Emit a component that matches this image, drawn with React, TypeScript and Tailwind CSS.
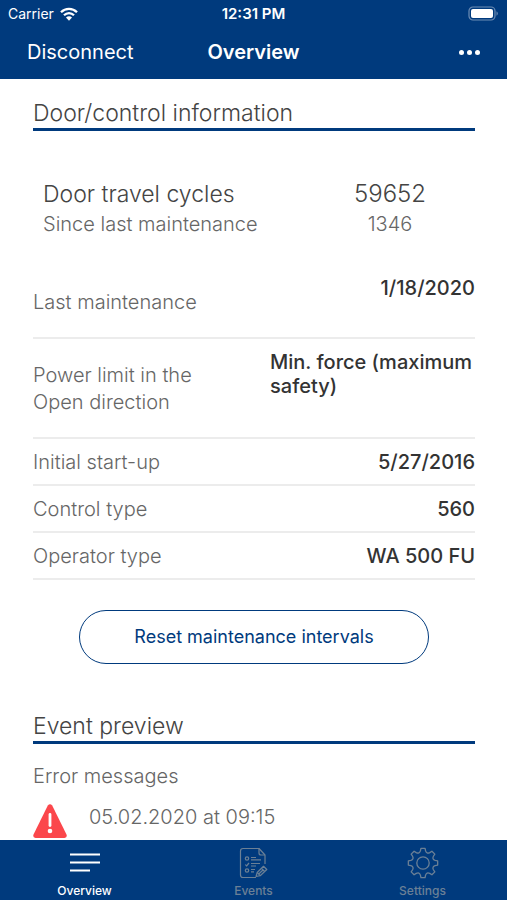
import React from 'react'

interface InfoRow {
  label: string
  value: string
  height: string
  align: string
}

// Door and control details
const infoRows: InfoRow[] = [
  { label: 'Last maintenance', value: '1/18/2020', height: 'min-h-[74px]', align: 'text-right' },
  {
    label: 'Power limit in the Open direction',
    value: 'Min. force (maximum safety)',
    height: 'min-h-[100px]',
    align: 'text-left',
  },
  { label: 'Initial start-up', value: '5/27/2016', height: 'min-h-[47px]', align: 'text-right' },
  { label: 'Control type', value: '560', height: 'min-h-[47px]', align: 'text-right' },
  { label: 'Operator type', value: 'WA 500 FU', height: 'min-h-[47px]', align: 'text-right' },
]

function WifiIcon() {
  return (
    <svg width="18" height="14" viewBox="0 0 18 14" fill="none" stroke="white" strokeWidth="2.3">
      <path d="M1 5.2C5.500 .7 12.500 .7 17 5.200" />
      <path d="M4 8.300C6.900 5.400 11.100 5.400 14 8.300" />
      <path d="M9 13.700L6 10.500C7.700 8.900 10.300 8.900 12 10.500Z" fill="white" stroke="none" />
    </svg>
  )
}

function BatteryIcon() {
  return (
    <svg width="31" height="15" viewBox="0 0 31 15" fill="none">
      <rect x="1" y="1" width="26" height="13" rx="4" stroke="#6d8db5" strokeWidth="1.2" />
      <rect x="3" y="3" width="22" height="9" rx="2" fill="white" />
      <path d="M28.500 5.300C30.300 6 30.300 9 28.500 9.700Z" fill="#6d8db5" />
    </svg>
  )
}

function WarningIcon() {
  return (
    <svg width="34" height="34" viewBox="0 0 34 34" className="shrink-0">
      <path
        d="M14.800 1.600Q17-1 19.200 1.600L33.500 30.500Q34.500 33.500 31.500 34H2.500Q-.5 33.500.5 30.500Z"
        fill="#fb474b"
      />
      <path d="M17 10.500V21.500" stroke="white" strokeWidth="2.800" strokeLinecap="round" />
      <circle cx="17" cy="27" r="2.300" fill="white" />
    </svg>
  )
}

function OverviewIcon() {
  return (
    <svg width="32" height="32" viewBox="0 0 32 32" stroke="white" strokeWidth="1.800">
      <path d="M1 7.500H31M1 15.500H31M1 23.500H21" />
    </svg>
  )
}

function EventsIcon() {
  return (
    <svg
      width="32"
      height="32"
      viewBox="0 0 32 32"
      fill="none"
      stroke="currentColor"
      strokeWidth="1.200"
      strokeLinejoin="round"
    >
      <path d="M27 17V8L21 1.500H5Q2.500 1.500 2.500 4V28Q2.500 30.500 5 30.500H18" />
      <path d="M21 1.500V6Q21 8 23 8H27" />
      <circle cx="9" cy="11.500" r="1.700" />
      <path d="M7.300 17.500L8.500 19L11 16" />
      <circle cx="9" cy="23.500" r="1.700" />
      <path d="M13 10.500H18M13 12.800H23M13 16.500H22M13 19H18M13 22.500H17M13 24.800H16" />
      <path d="M18 29.500L19.200 25.500L25.500 19.300L28.800 22.500L22.200 28.700Z" />
      <path d="M19.200 25.500L22.200 28.700M23.500 21.300L26.700 24.500M21 26.700L25.500 22.500" />
    </svg>
  )
}

// Cog outline built from eight teeth with round hollows between them
function SettingsIcon() {
  const angles = [0, 45, 90, 135, 180, 225, 270, 315]
  const polar = (r: number, deg: number) => {
    const rad = (deg * Math.PI) / 180
    return `${(16 + r * Math.sin(rad)).toFixed(2)} ${(16 - r * Math.cos(rad)).toFixed(2)}`
  }
  const outline = angles
    .map(
      (a, i) =>
        `${i === 0 ? 'M' : 'L'}${polar(12.4, a - 12)}L${polar(14.8, a - 8)}L${polar(14.8, a + 8)}L${polar(12.4, a + 12)}Q${polar(9.6, a + 22.5)} ${polar(12.4, a + 33)}`
    )
    .join('')

  return (
    <svg
      width="32"
      height="32"
      viewBox="0 0 32 32"
      fill="none"
      stroke="currentColor"
      strokeWidth="1.300"
      strokeLinejoin="round"
    >
      <path d={`${outline}Z`} />
      <circle cx="16" cy="16" r="6.200" />
    </svg>
  )
}

const tabs = [
  { name: 'Overview', icon: <OverviewIcon />, color: 'text-white' },
  { name: 'Events', icon: <EventsIcon />, color: 'text-[#6b8096]' },
  { name: 'Settings', icon: <SettingsIcon />, color: 'text-[#6b8096]' },
]

function SectionTitle({ children }: { children: React.ReactNode }) {
  return (
    <h2 className="border-b-[3px] border-[#003a7d] text-[23px] leading-[29px] font-light text-[#444444]">
      {children}
    </h2>
  )
}

export default function App() {
  return (
    <div className="flex h-screen flex-col bg-white font-['Inter','Liberation_Sans',sans-serif]">
      <header className="shrink-0 bg-[#003a7d] text-white">
        <div className="grid h-[27px] grid-cols-3 items-center px-2 text-sm">
          <div className="flex items-center gap-1.5">
            <span>Carrier</span>
            <WifiIcon />
          </div>
          <span className="text-center text-[15px] font-semibold">12:31 PM</span>
          <div className="flex justify-end">
            <BatteryIcon />
          </div>
        </div>
        <div className="grid h-[52px] grid-cols-3 items-center px-[27px] pb-0.5 text-xl">
          <button type="button" className="text-left">
            Disconnect
          </button>
          <h1 className="text-center font-semibold">Overview</h1>
          <button type="button" aria-label="More" className="flex justify-end gap-[3px]">
            <span className="size-[5px] rounded-full bg-white" />
            <span className="size-[5px] rounded-full bg-white" />
            <span className="size-[5px] rounded-full bg-white" />
          </button>
        </div>
      </header>

      <main className="min-h-0 flex-1 overflow-hidden pt-5 pr-8 pl-[33px]">
        <section>
          <SectionTitle>Door/control information</SectionTitle>

          {/* Cycle counters */}
          <div className="mt-12 grid grid-cols-[1fr_170px] pl-2.5">
            <span className="text-[23px] leading-[30px] font-light text-[#444444]">
              Door travel cycles
            </span>
            <span className="text-center text-2xl leading-[30px] font-light text-[#444444]">
              59652
            </span>
            <span className="text-xl leading-[30px] font-light text-[#666666]">
              Since last maintenance
            </span>
            <span className="text-center text-xl leading-[30px] font-light text-[#666666]">
              1346
            </span>
          </div>

          <dl className="mt-[26px]">
            {infoRows.map((row) => (
              <div
                key={row.label}
                className={`grid grid-cols-2 gap-8 border-b-2 border-[#ececec] text-xl ${row.height}`}
              >
                <dt className="self-center pt-0.5 leading-[27px] font-light text-[#666666]">
                  {row.label}
                </dt>
                <dd className={`pt-[11px] leading-6 font-medium text-[#333333] ${row.align}`}>
                  {row.value}
                </dd>
              </div>
            ))}
          </dl>

          <button
            type="button"
            className="mx-auto mt-[30px] block h-[54px] w-full max-w-[350px] rounded-full border border-[#003a7d] text-lg text-[#003a7d]"
          >
            Reset maintenance intervals
          </button>
        </section>

        <section className="mt-12">
          <SectionTitle>Event preview</SectionTitle>
          <h3 className="mt-[19px] text-xl leading-[27px] font-light text-[#666666]">
            Error messages
          </h3>
          <div className="mt-3.5 flex gap-[22px]">
            <WarningIcon />
            <time className="text-xl leading-[27px] font-light text-[#666666]">
              05.02.2020 at 09:15
            </time>
          </div>
        </section>
      </main>

      <nav className="grid h-[60px] shrink-0 grid-cols-3 bg-[#003a7d]">
        {tabs.map((tab) => (
          <button
            key={tab.name}
            type="button"
            className={`flex flex-col items-center pt-[7px] text-xs font-medium ${tab.color}`}
          >
            {tab.icon}
            <span className="mt-1">{tab.name}</span>
          </button>
        ))}
      </nav>
    </div>
  )
}
